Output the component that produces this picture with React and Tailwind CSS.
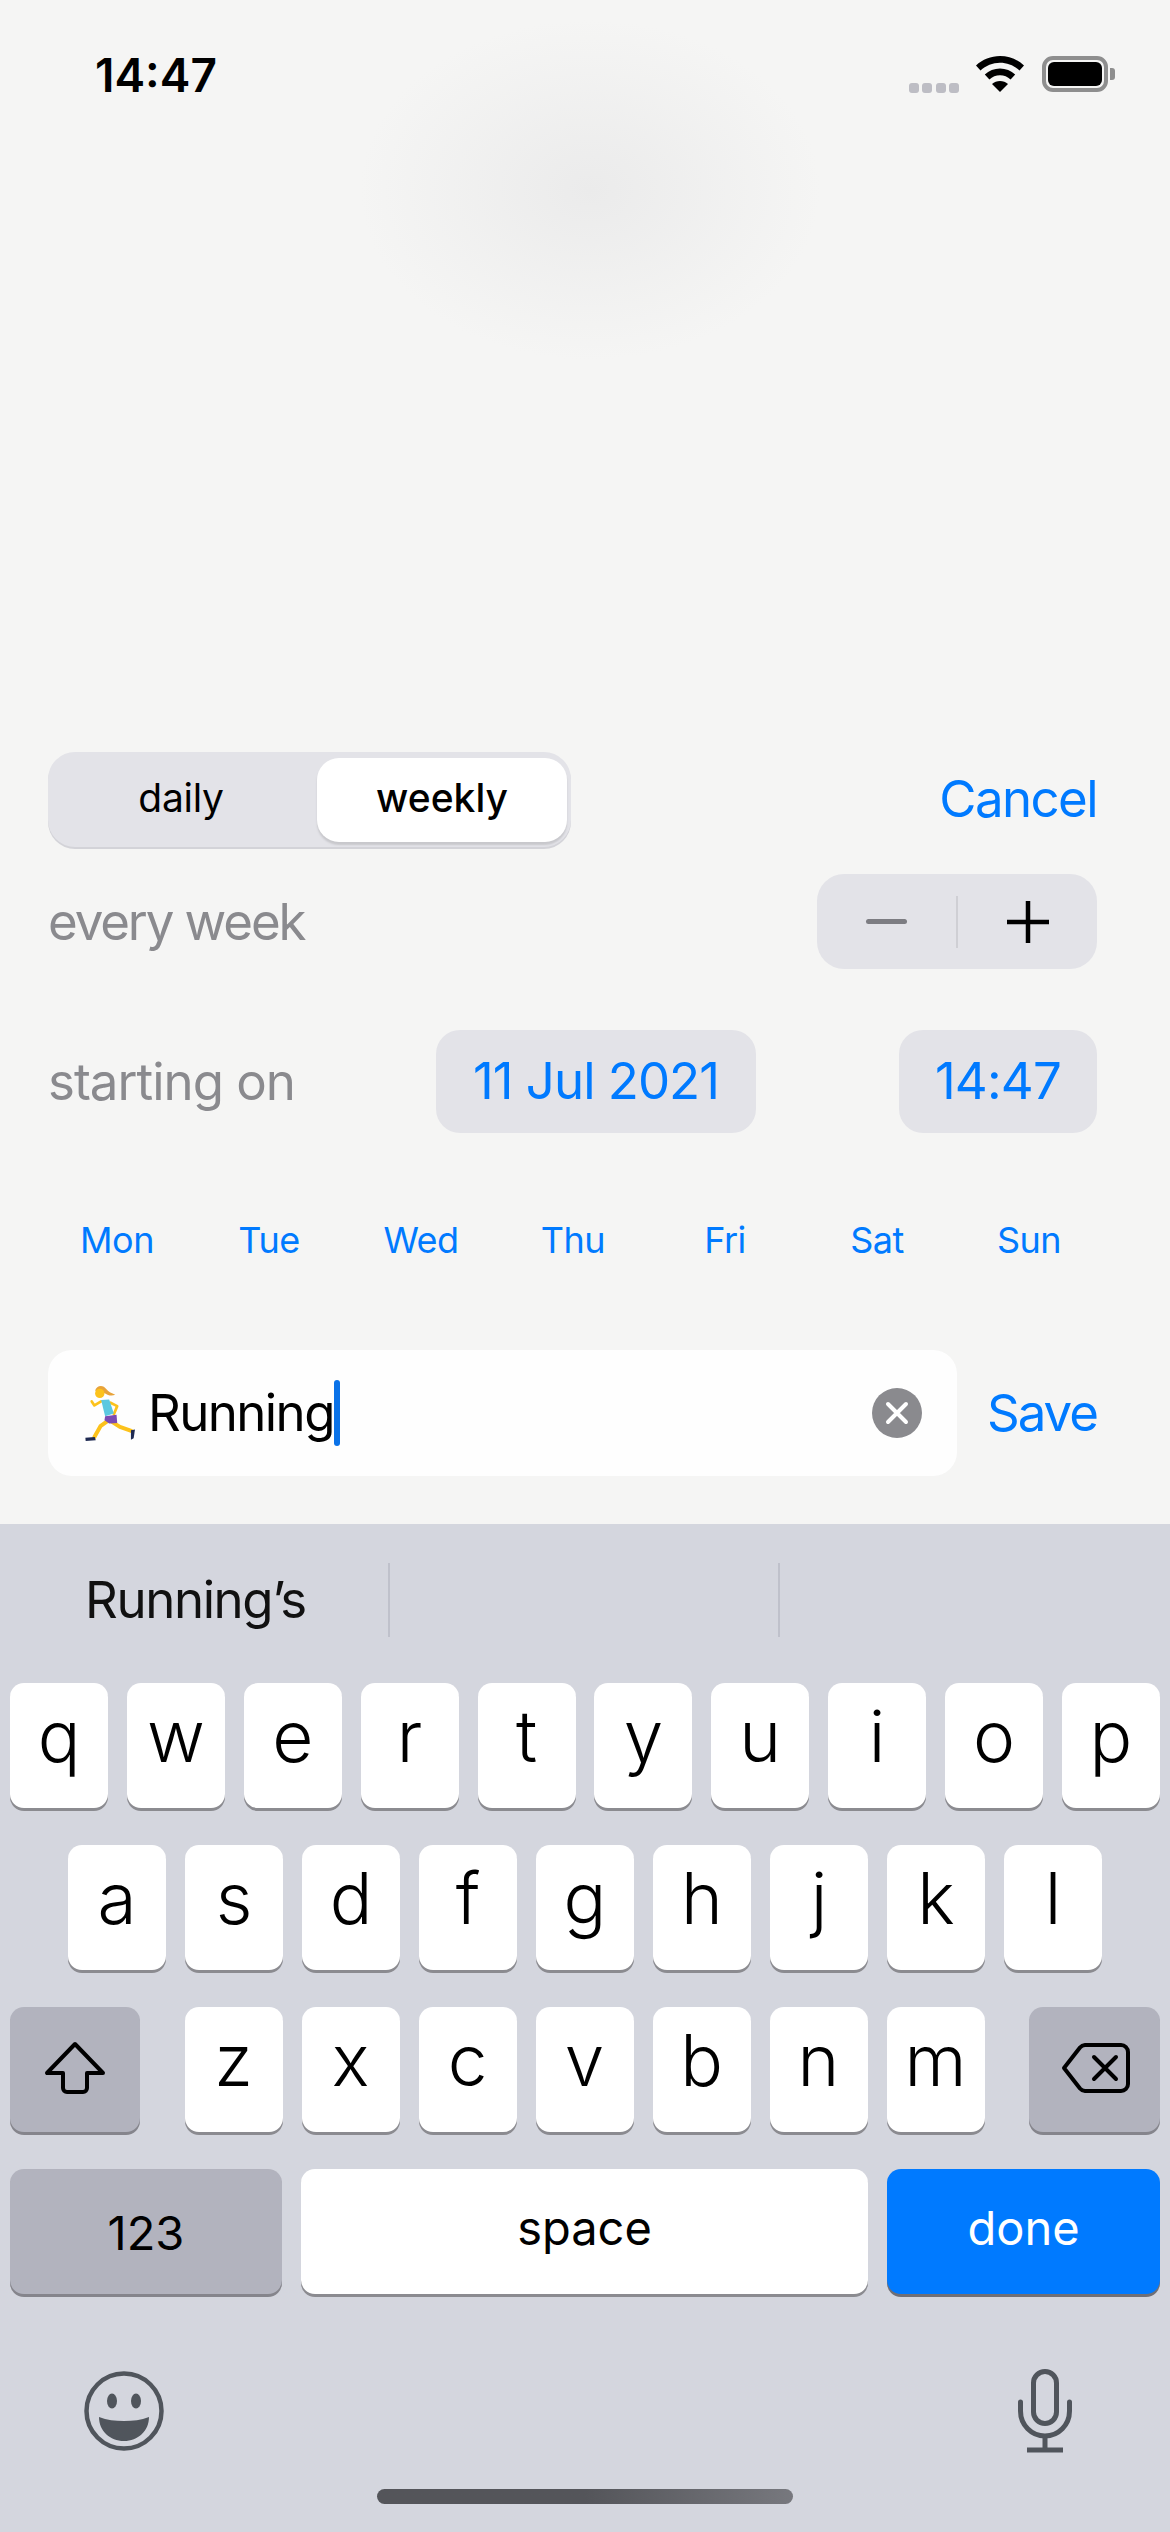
const days = ['Mon', 'Tue', 'Wed', 'Thu', 'Fri', 'Sat', 'Sun'];
const row1 = ['q', 'w', 'e', 'r', 't', 'y', 'u', 'i', 'o', 'p'];
const row2 = ['a', 's', 'd', 'f', 'g', 'h', 'j', 'k', 'l'];
const row3 = ['z', 'x', 'c', 'v', 'b', 'n', 'm'];

const Key = ({ label }) => <div className="w-[98px] h-[125px] bg-white rounded-[14px] shadow-[0_3px_0_#8b8b90] flex items-center justify-center pb-[18px] text-[71px] font-light text-black">
    {label}
  </div>;

const Wifi = () => <svg width="48" height="36" viewBox="0 0 48 36">
    <path d="M24 0C15 0 6.500 3.400 0 9.500l4.500 5C9.800 9.500 16.700 6.700 24 6.700s14.200 2.800 19.500 7.800l4.500-5C41.500 3.400 33 0 24 0z" fill="#000" />
    <path d="M24 12.500c-5.700 0-11.100 2.200-15.200 6l4.600 5c2.900-2.700 6.700-4.200 10.600-4.200s7.700 1.500 10.600 4.200l4.600-5c-4.100-3.800-9.500-6-15.200-6z" fill="#000" />
    <path d="M24 25c-3 0-5.800 1.100-8 3.100l8 7.900 8-7.900c-2.200-2-5-3.100-8-3.100z" fill="#000" />
  </svg>;

const Runner = () => <svg width="52" height="57" viewBox="135 105 155 170">
    <path d="M168 122c4-16 24-20 34-4 6 8 16 12 26 16-10 4-22 2-30-4-8-6-20-8-30-8z" fill="#e8a33a" />
    <circle cx="182" cy="130" r="14" fill="#fcc21b" />
    <path d="M186 154l-20 12-8-12" fill="none" stroke="#fcc21b" strokeWidth="8" strokeLinecap="round" strokeLinejoin="round" />
    <path d="M214 158l20 10-10 24" fill="none" stroke="#fcc21b" strokeWidth="8" strokeLinecap="round" strokeLinejoin="round" />
    <path d="M214 212l28 18 34 12" fill="none" stroke="#fcc21b" strokeWidth="12" strokeLinecap="round" strokeLinejoin="round" />
    <path d="M206 212l-22 16-18 32" fill="none" stroke="#fcc21b" strokeWidth="12" strokeLinecap="round" strokeLinejoin="round" />
    <path d="M186 150l24-2 14 42-26 8z" fill="#5cc8e0" />
    <path d="M198 198l34-4 2 24-24 2-14-10z" fill="#7b4bb3" />
    <path d="M139 262l28-2 3 10-30 2z" fill="#1f2a52" />
    <path d="M275 240l12-2-4 26-8 4z" fill="#1f2a52" />
  </svg>;

export default function App() {
  return <div className="w-[1170px] h-[2532px] flex flex-col overflow-hidden font-['Inter',sans-serif] text-black">
      <div className="h-[1524px] flex flex-col bg-[#f5f5f4] bg-[radial-gradient(ellipse_230px_170px_at_590px_190px,#ebebeb,#f5f5f4)]">
        <div className="h-[752px] shrink-0 px-[95px] pt-[50px] flex items-start justify-between pr-[55px]">
          <div className="text-[46px] leading-[50px] font-semibold">14:47</div>
          <div className="flex items-center mt-[6px]">
            <div className="flex gap-[3.500px] self-end mb-[-1px] mr-[17px]">
              <span className="w-[10px] h-[10px] rounded-[3px] bg-[#bdbdc4]" />
              <span className="w-[10px] h-[10px] rounded-[3px] bg-[#bdbdc4]" />
              <span className="w-[10px] h-[10px] rounded-[3px] bg-[#bdbdc4]" />
              <span className="w-[10px] h-[10px] rounded-[3px] bg-[#bdbdc4]" />
            </div>
            <Wifi />
            <div className="ml-[18px] w-[66px] h-[36px] rounded-[11px] border-[4px] border-[#8e8e8e] p-[2px]">
              <div className="w-full h-full rounded-[6px] bg-black" />
            </div>
            <div className="ml-[2px] w-[5px] h-[12px] rounded-r-[3px] bg-[#8e8e8e]" />
          </div>
        </div>

        <div className="pl-[48px] pr-[73px] h-[95px] flex items-center justify-between">
          <div className="w-[523px] h-[95px] rounded-[27px] bg-[#e3e3e8] shadow-[0_2px_0_#d3d3d8] flex items-center pl-[4px] pr-[4px]">
            <div className="w-[258px] text-center text-[39px] pb-[2px] tracking-[-0.3px]">daily</div>
            <div className="ml-[7px] w-[250px] h-[84px] rounded-[22px] bg-white shadow-[0_3px_2px_#c8c8cc] flex items-center justify-center text-[39px] font-medium pb-[2px]">weekly</div>
          </div>
          <div className="text-[51px] text-[#007aff] tracking-[-1.6px]">Cancel</div>
        </div>

        <div className="pl-[48px] pr-[73px] h-[95px] mt-[27px] flex items-center justify-between">
          <div className="text-[51px] text-[#8a8a8e] tracking-[-2.1px] pt-[2px]">every week</div>
          <div className="w-[280px] h-[95px] rounded-[27px] bg-[#e3e3e8] flex items-center">
            <div className="flex-1 flex justify-center">
              <div className="w-[41px] h-[5px] rounded-full bg-[#7d7d82]" />
            </div>
            <div className="w-[2px] h-[52px] bg-[#cfcfd4]" />
            <div className="flex-1 flex justify-center">
              <svg width="42" height="42" viewBox="0 0 42 42">
                <path d="M21 0v42M0 21h42" stroke="#000" strokeWidth="4.500" strokeLinecap="round" />
              </svg>
            </div>
          </div>
        </div>

        <div className="pl-[48px] pr-[73px] h-[103px] mt-[61px] flex items-center">
          <div className="text-[51px] text-[#8a8a8e] w-[388px] tracking-[-1px] pt-[2px]">starting on</div>
          <div className="w-[320px] h-[103px] rounded-[24px] bg-[#e3e3e8] flex items-center justify-center text-[51px] text-[#007aff] tracking-[-1px]">11 Jul 2021</div>
          <div className="ml-auto w-[198px] h-[103px] rounded-[24px] bg-[#e3e3e8] flex items-center justify-center text-[51px] text-[#007aff] tracking-[-0.8px]">14:47</div>
        </div>

        <div className="pl-[41px] pr-[65px] mt-[82px] grid grid-cols-7 text-center text-[36px] text-[#007aff] h-[50px] leading-[50px] tracking-[-0.5px]">
          {days.map(day => <div key={day}>{day}</div>)}
        </div>

        <div className="pl-[48px] pr-[73px] mt-[85px] flex items-center justify-between">
          <div className="w-[909px] h-[126px] rounded-[24px] bg-[#fefefe] flex items-center pl-[36px] pr-[35px]">
            <Runner />
            <div className="ml-[12px] text-[51px] tracking-[-1.6px]">Running</div>
            <div className="w-[6px] h-[66px] rounded-full bg-[#0a72e8] mt-[-1px]" />
            <div className="ml-auto w-[50px] h-[50px] rounded-full bg-[#8a8a8e] flex items-center justify-center">
              <svg width="24" height="24" viewBox="0 0 24 24">
                <path d="M3 3l18 18M21 3L3 21" stroke="#fff" strokeWidth="4" strokeLinecap="round" />
              </svg>
            </div>
          </div>
          <div className="text-[51px] text-[#007aff] tracking-[-2px]">Save</div>
        </div>
      </div>

      <div className="flex-1 bg-[#d4d6de] flex flex-col">
        <div className="h-[159px] flex items-start pt-[39px]">
          <div className="w-[388px] h-[74px] pl-[85px] flex items-center text-[51px] text-[#111] tracking-[-1.4px]">Running’s</div>
          <div className="w-[2px] h-[74px] bg-[#bfc1cb]" />
          <div className="w-[388px] h-[74px]" />
          <div className="w-[2px] h-[74px] bg-[#bfc1cb]" />
        </div>

        <div className="px-[10px] flex flex-col gap-[37px]">
          <div className="flex justify-between">
            {row1.map(k => <Key key={k} label={k} />)}
          </div>
          <div className="flex justify-center gap-[19px]">
            {row2.map(k => <Key key={k} label={k} />)}
          </div>
          <div className="flex justify-between">
            <div className="w-[130px] h-[125px] rounded-[14px] bg-[#b2b3be] shadow-[0_3px_0_#85858c] flex items-center justify-center pb-[3px]">
              <svg width="62" height="54" viewBox="0 0 62 54" fill="none">
                <path d="M31 3L3 32h16v15a4 4 0 0 0 4 4h16a4 4 0 0 0 4-4V32h16z" stroke="#000" strokeWidth="4" strokeLinejoin="round" />
              </svg>
            </div>
            <div className="flex gap-[19px]">
              {row3.map(k => <Key key={k} label={k} />)}
            </div>
            <div className="w-[131px] h-[125px] rounded-[14px] bg-[#b2b3be] shadow-[0_3px_0_#85858c] flex items-center justify-center pl-[2px] pb-[3px]">
              <svg width="70" height="52" viewBox="0 0 70 52" fill="none">
                <path d="M24 3h36a7 7 0 0 1 7 7v32a7 7 0 0 1-7 7H24a7 7 0 0 1-5-2.500L3 26 19 5.500A7 7 0 0 1 24 3z" stroke="#000" strokeWidth="4" strokeLinejoin="round" />
                <path d="M33 15l22 22M55 15L33 37" stroke="#000" strokeWidth="4" strokeLinecap="round" />
              </svg>
            </div>
          </div>
          <div className="flex gap-[19px]">
            <div className="w-[272px] h-[125px] rounded-[14px] bg-[#b2b3be] shadow-[0_3px_0_#85858c] flex items-center justify-center text-[47px] pt-[4px]">123</div>
            <div className="flex-1 h-[125px] rounded-[14px] bg-white shadow-[0_3px_0_#8b8b90] flex items-center justify-center text-[47px] pb-[6px]">space</div>
            <div className="w-[273px] h-[125px] rounded-[14px] bg-[#007aff] shadow-[0_3px_0_#6f6f76] flex items-center justify-center text-[47px] text-white pb-[6px]">done</div>
          </div>
        </div>

        <div className="pl-[84px] pr-[98px] mt-[75px] flex items-center justify-between">
          <svg width="80" height="80" viewBox="0 0 80 80">
            <circle cx="40" cy="40" r="37.500" fill="none" stroke="#50555c" strokeWidth="4.500" />
            <ellipse cx="28" cy="30" rx="5" ry="7.500" fill="#50555c" />
            <ellipse cx="52" cy="30" rx="5" ry="7.500" fill="#50555c" />
            <path d="M15 46c8 3 16 4 25 4s17-1 25-4c0 14-11 24-25 24S15 60 15 46z" fill="#50555c" />
          </svg>
          <svg width="54" height="84" viewBox="0 0 54 84" fill="none" stroke="#50555c" strokeWidth="5" strokeLinecap="round">
            <rect x="15.500" y="2.500" width="23" height="52" rx="11.500" />
            <path d="M2.500 33v9c0 14 11 25 24.500 25s24.500-11 24.500-25v-9" />
            <path d="M27 67v14M9 81h36" strokeLinecap="butt" strokeWidth="5" />
          </svg>
        </div>

        <div className="mt-[36px] self-center w-[416px] h-[15px] rounded-full bg-gradient-to-r from-[#54555a] via-[#54555a] to-[#77787e]" />
      </div>
    </div>;
}
